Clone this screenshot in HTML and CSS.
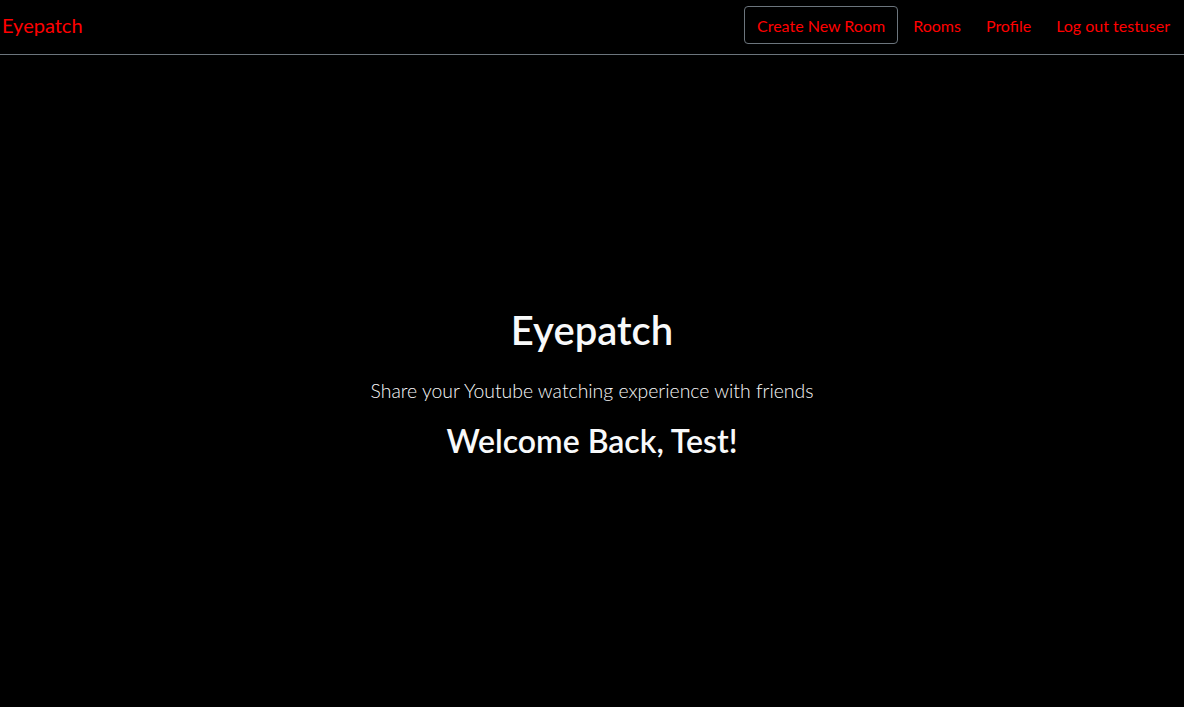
FILE: index.html
```html
<!DOCTYPE html>
<html lang="en">
<head>
<meta charset="utf-8">
<title>Eyepatch</title>
<link rel="stylesheet" href="styles.css">
</head>
<body>
<nav class="navbar">
  <a class="brand" href="#">Eyepatch</a>
  <div class="nav-links">
    <a class="btn-create" href="#">Create New Room</a>
    <a class="nav-link" href="#">Rooms</a>
    <a class="nav-link" href="#">Profile</a>
    <a class="nav-link" href="#">Log out testuser</a>
  </div>
</nav>
<main class="hero">
  <h1 class="title">Eyepatch</h1>
  <p class="lead">Share your Youtube watching experience with friends</p>
  <h2 class="welcome">Welcome Back, Test!</h2>
</main>
</body>
</html>
```

FILE: styles.css
```css
html, body {
  margin: 0;
  padding: 0;
  height: 100%;
  background: #000;
  font-family: "Lato", "Noto Sans", sans-serif;
}
body {
  display: flex;
  flex-direction: column;
}
a { text-decoration: none; color: #ff0000; }
.navbar {
  height: 55px;
  box-sizing: border-box;
  border-bottom: 1px solid #6c757d;
  display: flex;
  align-items: center;
  justify-content: space-between;
  padding: 0 14px 4px 2px;
  flex-shrink: 0;
}
.brand {
  font-size: 20px;
  color: #ff0000;
}
.nav-links {
  display: flex;
  align-items: center;
  gap: 25px;
}
.btn-create {
  font-size: 16px;
  padding: 0 12px;
  height: 38px;
  box-sizing: border-box;
  display: flex;
  align-items: center;
  border: 1px solid #6c757d;
  border-radius: 4px;
  margin-right: -10px;
}
.nav-link {
  font-size: 16px;
}
.hero {
  flex: 1;
  display: flex;
  flex-direction: column;
  align-items: center;
  justify-content: center;
  color: #f8f9fa;
  text-align: center;
  padding-top: 4px;
}
.title {
  font-size: 40px;
  font-weight: 600;
  margin: 0 0 22px;
  line-height: 48px;
}
.lead {
  font-size: 19.4px;
  font-weight: 300;
  line-height: 30px;
  margin: 0 0 16px;
}
.welcome {
  font-size: 32px;
  font-weight: 600;
  margin: 0;
  line-height: 38px;
}
```
